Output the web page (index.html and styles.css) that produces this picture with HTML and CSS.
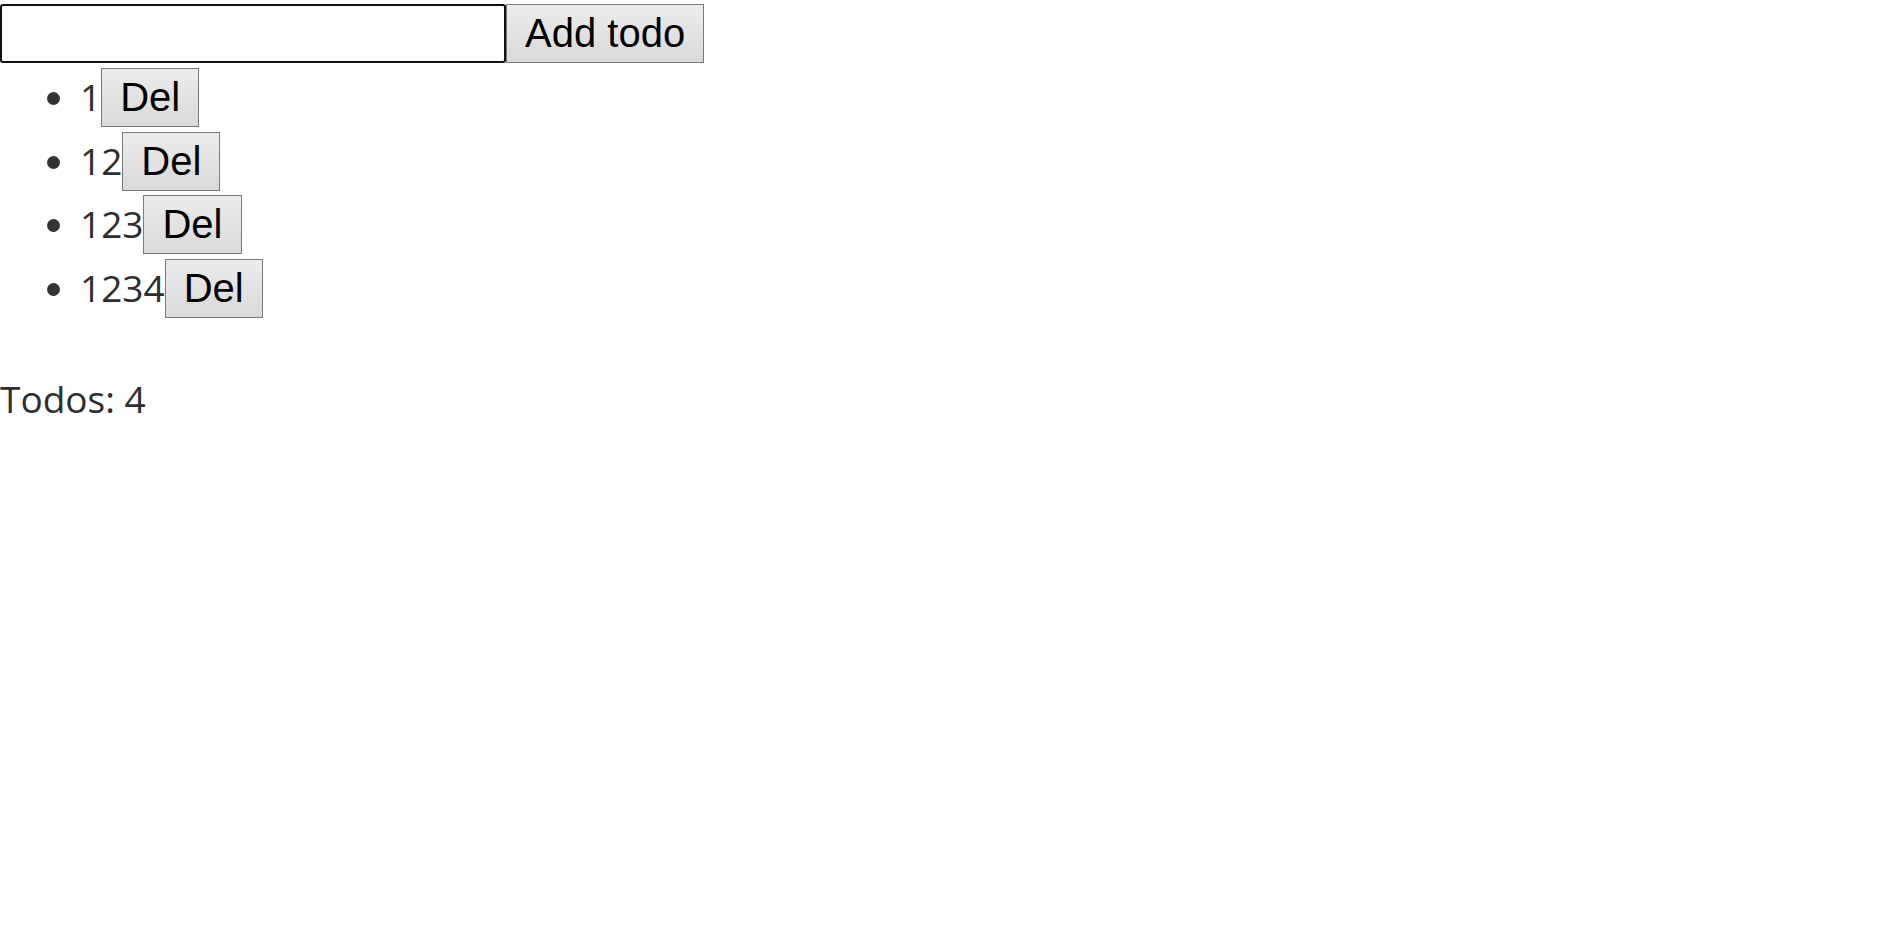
FILE: index.html
```html
<!DOCTYPE html>
<html>
<head>
<meta charset="utf-8">
<title>Todos</title>
<link rel="stylesheet" href="styles.css">
</head>
<body>
<div class="app">
  <form class="add-row">
    <input class="todo-input" type="text">
    <button class="btn" type="button">Add todo</button>
  </form>
  <ul class="todo-list">
    <li class="todo-item"><span class="todo-text">1</span><button class="btn" type="button">Del</button></li>
    <li class="todo-item"><span class="todo-text">12</span><button class="btn" type="button">Del</button></li>
    <li class="todo-item"><span class="todo-text">123</span><button class="btn" type="button">Del</button></li>
    <li class="todo-item"><span class="todo-text">1234</span><button class="btn" type="button">Del</button></li>
  </ul>
  <p class="count">Todos: 4</p>
</div>
</body>
</html>
```

FILE: styles.css
```css
html, body {
  margin: 0;
  padding: 0;
  background: #ffffff;
}

body {
  font-family: "Open Sans", "Noto Sans", sans-serif;
  font-size: 37px;
  color: #2e2e2e;
}

.add-row {
  display: flex;
  align-items: stretch;
  margin: 0;
  padding-top: 4px;
}

.todo-input {
  box-sizing: border-box;
  width: 506px;
  height: 59px;
  margin: 0;
  border: 2px solid #111111;
  border-radius: 3px;
  background: #ffffff;
  font-size: 37px;
  padding: 0 6px;
  outline: none;
}

.btn {
  box-sizing: border-box;
  height: 59px;
  margin: 0;
  padding: 0 18px;
  font-family: "Liberation Sans", Arial, sans-serif;
  font-size: 40px;
  color: #000000;
  background: linear-gradient(#ececec, #d9d9d9);
  border: 1px solid #7a7a7a;
  border-radius: 0;
  line-height: 57px;
  vertical-align: baseline;
}

.todo-list {
  margin: 0;
  padding-top: 2px;
  padding-left: 80px;
  list-style: disc;
}

.todo-item {
  line-height: 63.67px;
}

.todo-item::marker {
  color: #333333;
}

.todo-text {
  color: #2e2e2e;
}

.count {
  margin: 53px 0 0 0;
}
```
